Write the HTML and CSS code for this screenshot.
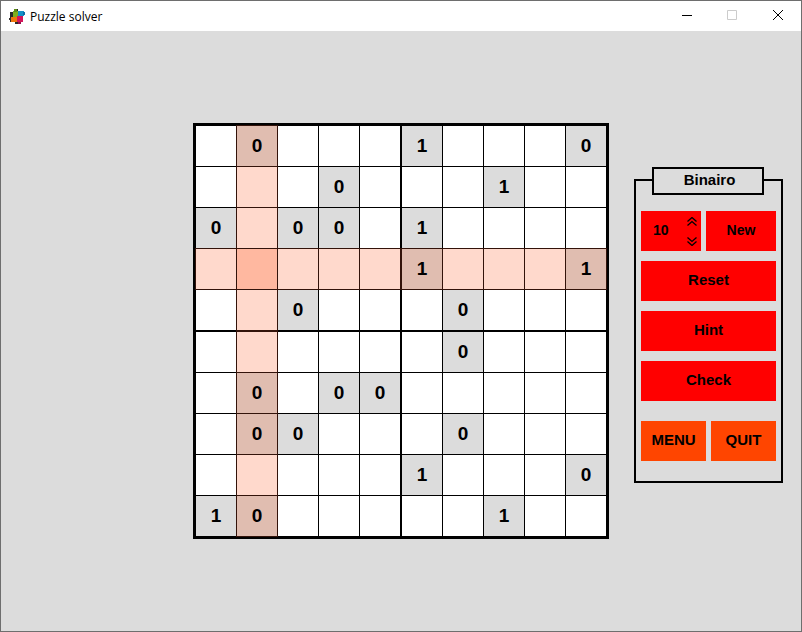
FILE: index.html
```html
<!DOCTYPE html>
<html lang="en">
<head>
<meta charset="utf-8">
<title>Puzzle solver</title>
<link rel="stylesheet" href="styles.css">
</head>
<body>
<div class="window">
  <header class="titlebar">
    <svg class="app-icon" width="17" height="17" viewBox="0 0 17 17">
      <path fill="#2a2a2a" d="M6 1h3v2h1v11H9v2H6v-2H1V4h5z"/>
      <rect x="4" y="3" width="5" height="6" fill="#7fae1e"/>
      <rect x="5" y="1" width="3" height="3" fill="#5a8a14"/>
      <rect x="9" y="3" width="6" height="5" fill="#1590c8"/>
      <rect x="14" y="4" width="2" height="3" fill="#0b6fa8"/>
      <rect x="2" y="9" width="6" height="5" fill="#f0760c"/>
      <rect x="0" y="10" width="2" height="2" fill="#333"/>
      <rect x="8" y="8" width="6" height="6" fill="#d4145a"/>
      <rect x="9" y="14" width="3" height="2" fill="#8f0f4a"/>
    </svg>
    <span class="app-title">Puzzle solver</span>
    <div class="controls">
      <svg class="ctl" width="46" height="30" viewBox="0 0 46 30"><path d="M19 14.5h10" stroke="#000" fill="none"/></svg>
      <svg class="ctl" width="46" height="30" viewBox="0 0 46 30"><path d="M18.500 9.500h9v9h-9z" stroke="#ccc" fill="none"/></svg>
      <svg class="ctl" width="46" height="30" viewBox="0 0 46 30"><path d="M18 9l10 10M28 9L18 19" stroke="#000" fill="none"/></svg>
    </div>
  </header>
  <main class="content">
    <div class="board">
      <div class="cell"></div><div class="cell gh">0</div><div class="cell"></div><div class="cell"></div><div class="cell"></div><div class="cell g">1</div><div class="cell"></div><div class="cell"></div><div class="cell"></div><div class="cell g">0</div>
      <div class="cell"></div><div class="cell h"></div><div class="cell"></div><div class="cell g">0</div><div class="cell"></div><div class="cell"></div><div class="cell"></div><div class="cell g">1</div><div class="cell"></div><div class="cell"></div>
      <div class="cell g">0</div><div class="cell h"></div><div class="cell g">0</div><div class="cell g">0</div><div class="cell"></div><div class="cell g">1</div><div class="cell"></div><div class="cell"></div><div class="cell"></div><div class="cell"></div>
      <div class="cell h"></div><div class="cell x"></div><div class="cell h"></div><div class="cell h"></div><div class="cell h"></div><div class="cell gh">1</div><div class="cell h"></div><div class="cell h"></div><div class="cell h"></div><div class="cell gh">1</div>
      <div class="cell"></div><div class="cell h"></div><div class="cell g">0</div><div class="cell"></div><div class="cell"></div><div class="cell"></div><div class="cell g">0</div><div class="cell"></div><div class="cell"></div><div class="cell"></div>
      <div class="cell"></div><div class="cell h"></div><div class="cell"></div><div class="cell"></div><div class="cell"></div><div class="cell"></div><div class="cell g">0</div><div class="cell"></div><div class="cell"></div><div class="cell"></div>
      <div class="cell"></div><div class="cell gh">0</div><div class="cell"></div><div class="cell g">0</div><div class="cell g">0</div><div class="cell"></div><div class="cell"></div><div class="cell"></div><div class="cell"></div><div class="cell"></div>
      <div class="cell"></div><div class="cell gh">0</div><div class="cell g">0</div><div class="cell"></div><div class="cell"></div><div class="cell"></div><div class="cell g">0</div><div class="cell"></div><div class="cell"></div><div class="cell"></div>
      <div class="cell"></div><div class="cell h"></div><div class="cell"></div><div class="cell"></div><div class="cell"></div><div class="cell g">1</div><div class="cell"></div><div class="cell"></div><div class="cell"></div><div class="cell g">0</div>
      <div class="cell g">1</div><div class="cell gh">0</div><div class="cell"></div><div class="cell"></div><div class="cell"></div><div class="cell"></div><div class="cell"></div><div class="cell g">1</div><div class="cell"></div><div class="cell"></div>
    </div>
    <aside class="panel">
      <div class="legend">Binairo</div>
      <div class="actions">
        <div class="row">
          <div class="btn red spin">
            <span class="spin-value">10</span>
            <div class="arrows">
              <svg width="10" height="9" viewBox="0 0 10 9"><path d="M.5 4.500L5 .5l4.500 4M.5 8.500L5 4.500l4.500 4" stroke="#000" stroke-width="1.300" fill="none"/></svg>
              <svg width="10" height="9" viewBox="0 0 10 9"><path d="M.5 .5L5 4.500l4.500-4M.5 4.500L5 8.500l4.500-4" stroke="#000" stroke-width="1.300" fill="none"/></svg>
            </div>
          </div>
          <div class="btn red grow narrow">New</div>
        </div>
        <div class="btn red">Reset</div>
        <div class="btn red">Hint</div>
        <div class="btn red">Check</div>
        <div class="row split">
          <div class="btn orange grow">MENU</div>
          <div class="btn orange grow">QUIT</div>
        </div>
      </div>
    </aside>
  </main>
</div>
</body>
</html>
```
FILE: styles.css
```css
* { box-sizing: border-box; }
html, body { margin: 0; padding: 0; }
body { width: 802px; height: 632px; overflow: hidden; font-family: "Liberation Sans", Arial, sans-serif; color: #000; }

.window {
  width: 802px;
  height: 632px;
  display: flex;
  flex-direction: column;
  border: 1px solid #6e6e6e;
  background: #dcdcdc;
}

.titlebar {
  height: 30px;
  flex: none;
  display: flex;
  align-items: center;
  background: #fff;
  padding-left: 8px;
}
.app-icon { flex: none; }
.app-title { margin-left: 4px; font: 12px "Open Sans", "Noto Sans", sans-serif; }
.controls { margin-left: auto; display: flex; }
.ctl { display: block; }

.content {
  flex: 1;
  display: flex;
  align-items: flex-start;
  padding: 92px 0 0 192px;
  gap: 25px;
}

.board {
  display: grid;
  grid-template-columns: repeat(5, 40px) 41px repeat(4, 40px);
  grid-template-rows: repeat(5, 40px) 41px repeat(4, 40px);
  gap: 1px;
  border: 3px solid #000;
  background: #000;
}
.cell {
  display: flex;
  align-items: center;
  justify-content: center;
  background: #fff;
  font-size: 19px;
  font-weight: bold;
  color: #000;
}
.cell:nth-child(10n+6) { margin-left: 1px; }
.cell:nth-child(n+51):nth-child(-n+60) { margin-top: 1px; }
.g { background: #dcdcdc; }
.h { background: #ffd9cc; box-shadow: 0 0 0 1px #33130a; }
.x { background: #ffb8a0; box-shadow: 0 0 0 1px #33130a; }
.gh { background: #e0bdb0; box-shadow: 0 0 0 1px #33130a; }

.panel {
  width: 149px;
  margin-top: 56px;
  border: 2px solid #000;
  padding: 0 5px 20px;
}
.legend {
  width: 112px;
  height: 28px;
  margin: -14px 0 16px 11px;
  padding: 0 0 3px 3px;
  display: flex;
  align-items: center;
  justify-content: center;
  border: 2px solid #000;
  background: #dcdcdc;
  font-size: 15px;
  font-weight: bold;
}
.actions { display: flex; flex-direction: column; gap: 10px; }
.row { display: flex; gap: 5px; }
.split { margin-top: 10px; }
.btn {
  height: 40px;
  padding-bottom: 3px;
  display: flex;
  align-items: center;
  justify-content: center;
  font-size: 15px;
  font-weight: bold;
}
.narrow { font-size: 14px; }
.grow { flex: 1; }
.red { background: #ff0000; }
.orange { background: #ff4500; }
.spin { width: 60px; justify-content: space-between; padding: 0 4px 0 12px; font-size: 14px; }
.spin-value { margin-bottom: 2px; }
.arrows { display: flex; flex-direction: column; gap: 11px; margin-top: 1px; }
.arrows svg { display: block; }
```
